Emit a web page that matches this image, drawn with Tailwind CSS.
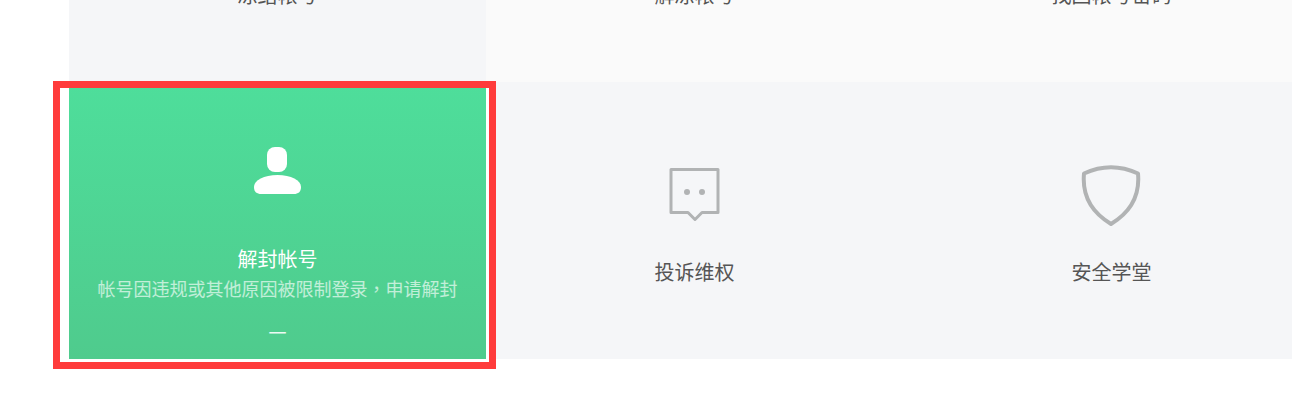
<!DOCTYPE html>
<html lang="zh-CN">

<head>
  <meta charset="UTF-8" />
  <title>帐号服务</title>
  <script src="https://cdn.jsdelivr.net/npm/@tailwindcss/browser@4"></script>
</head>

<body class="relative h-[414px] overflow-hidden bg-white text-[#555] font-['Noto_Sans_CJK_SC',sans-serif]">

  <!-- Services grid, first row is scrolled off the top -->
  <main class="ml-[69px] -mt-[195px] grid w-[1251px] grid-cols-3 auto-rows-[277px]">
    <section class="flex flex-col items-center bg-[#f5f6f8] pt-[177px]">
      <p class="text-[20px] leading-[26px]">冻结帐号</p>
    </section>
    <section class="flex flex-col items-center bg-[#fafafa] pt-[177px]">
      <p class="text-[20px] leading-[26px]">解冻帐号</p>
    </section>
    <section class="flex flex-col items-center bg-[#fafafa] pt-[177px]">
      <p class="text-[20px] leading-[26px]">找回帐号密码</p>
    </section>

    <!-- Active card -->
    <section class="flex flex-col items-center bg-gradient-to-b from-[#4ede9b] to-[#4fcb8d] pt-[6px] text-center text-white">
      <svg class="mt-[59px] h-[50px] w-[50px]" viewBox="0 0 50 50" fill="#fff">
        <rect x="14" y="0" width="20" height="25" rx="8" />
        <path d="M1 40C1 33 11 28 24.500 28S48 33 48 40C48 45 45 47 41 47H8C4 47 1 45 1 40z" />
      </svg>
      <h2 class="mt-[49px] text-[20px] leading-[26px]">解封帐号</h2>
      <p class="-mt-[6px] w-[370px] text-[18px] leading-[44px] text-white/65">帐号因违规或其他原因被限制登录<span lang="zh-TW" class="font-['Noto_Sans_CJK_TC',sans-serif]">，</span>申请解封<span class="text-white/90">一</span></p>
    </section>

    <section class="flex flex-col items-center bg-[#f5f6f8] pt-[85px]">
      <svg class="h-[54px] w-[52px]" viewBox="0 0 52 54" fill="none" stroke="#b1b3b4" stroke-width="3">
        <path d="M2 2.500h47v43H33l-7 7-7-7H2z" stroke-linejoin="round" />
        <circle cx="18" cy="25" r="3" fill="#b1b3b4" stroke="none" />
        <circle cx="33" cy="25" r="3" fill="#b1b3b4" stroke="none" />
      </svg>
      <p class="mt-[38px] text-[20px] leading-[26px]">投诉维权</p>
    </section>
    <section class="flex flex-col items-center bg-[#f5f6f8] pt-[83px]">
      <svg class="-ml-[2px] h-[62px] w-[60px]" viewBox="0 0 60 62" fill="none" stroke="#b1b3b4" stroke-width="4">
        <path d="M3 8.500Q30-4 57 8.500C59 30 50 47 30 59 10 47 1 30 3 8.500z" stroke-linejoin="round" />
      </svg>
      <p class="mt-[32px] text-[20px] leading-[26px]">安全学堂</p>
    </section>
  </main>

  <!-- Red annotation box drawn over the screenshot -->
  <div class="absolute left-[53px] top-[81px] h-[288px] w-[443px] border-[7px] border-[#ff3b3b]">
    <div class="h-full w-full border-r-[3px] border-b-[3px] border-white"></div>
  </div>

</body>

</html>
